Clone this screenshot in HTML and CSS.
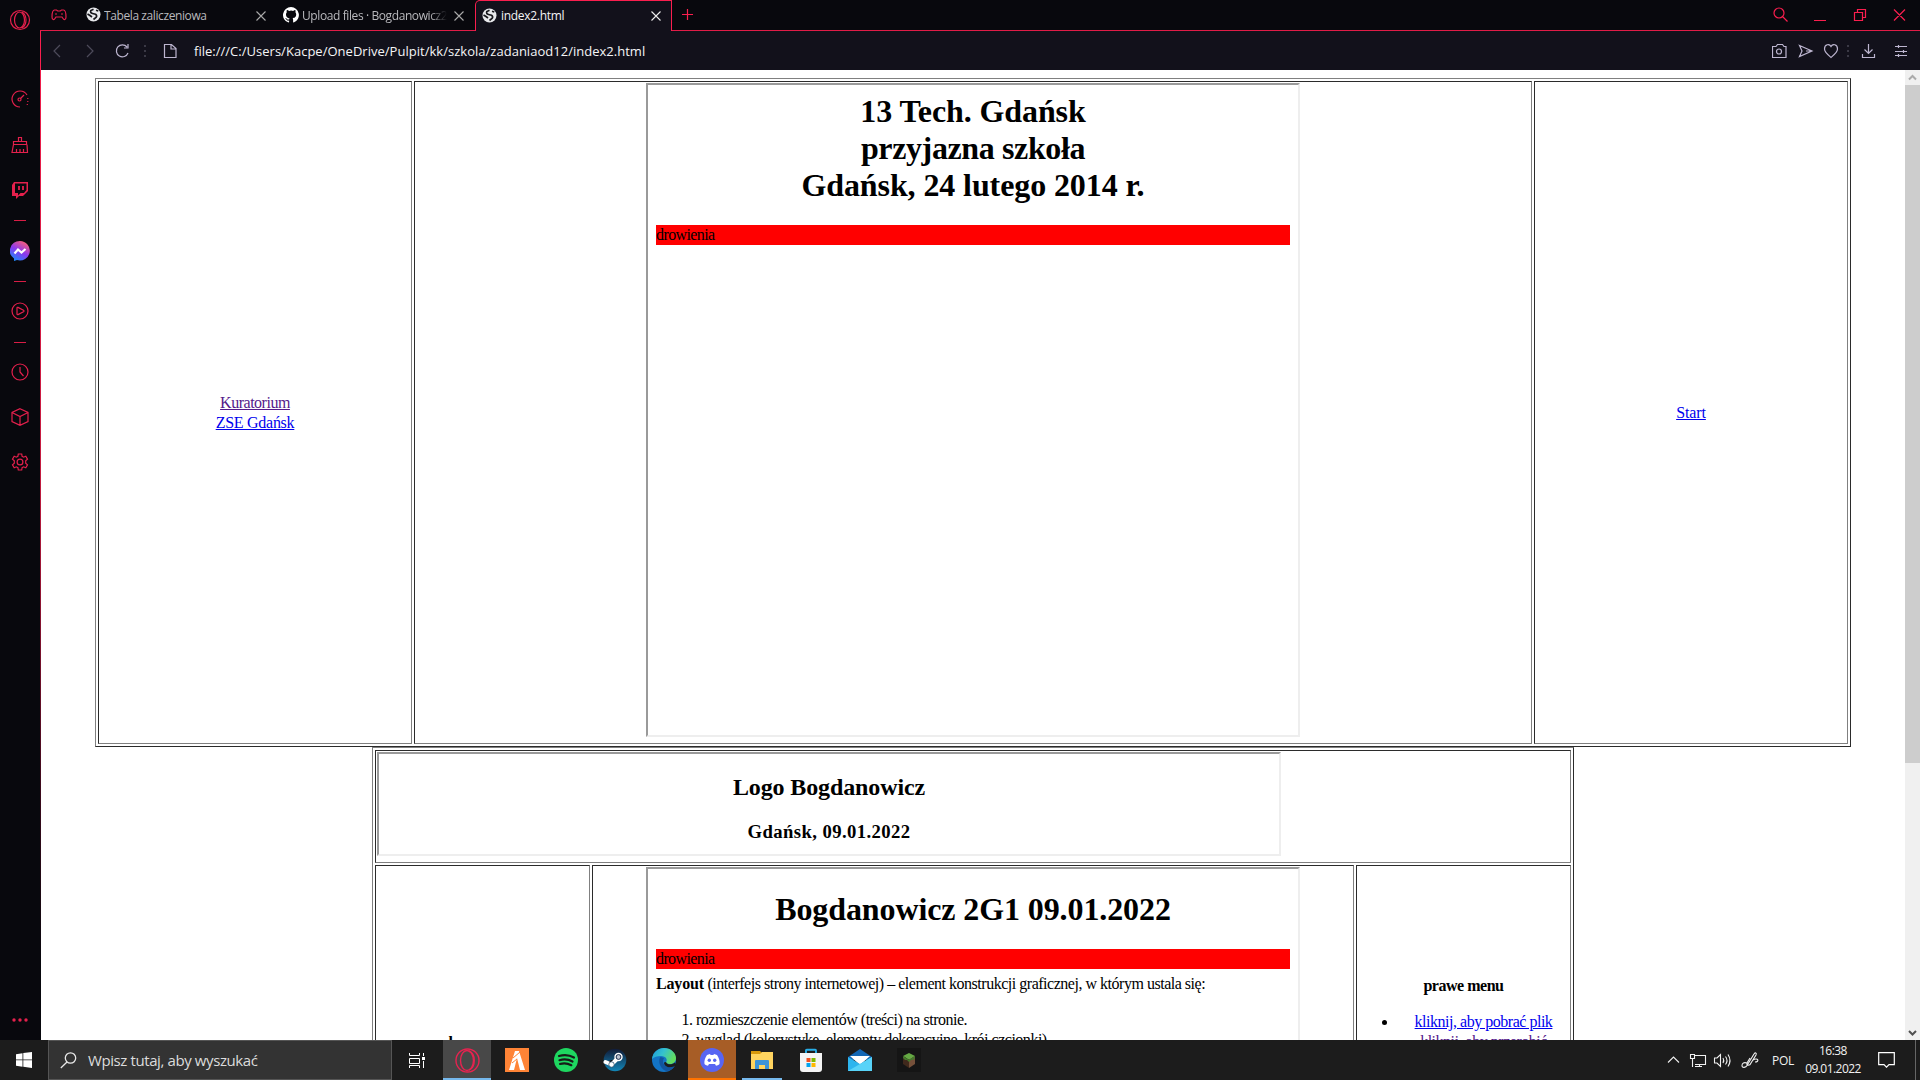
FILE: index.html
```html
<!DOCTYPE html>
<html lang="pl">
<head>
<meta charset="utf-8">
<title>index2.html</title>
<link rel="stylesheet" href="styles.css">
</head>
<body>
<div class="browser">
  <aside class="sidebar">
    <svg class="icon opera" width="22" height="22" viewBox="0 0 22 22"><circle cx="11" cy="11" r="9.5"/><ellipse cx="10.5" cy="11" rx="5" ry="8"/><path d="M13 3c3 2 4 5 4 8s-1 6-4 8"/></svg>
    <svg class="icon speed" width="18" height="18" viewBox="0 0 18 18"><path d="M9 17A8 8 0 1 1 16 5M16.800 8v1M16.800 11v1M16.300 14v1"/><circle cx="8.500" cy="9.500" r="1.500"/><path d="M9.500 8.500L13 5"/></svg>
    <svg class="icon broom" width="18" height="18" viewBox="0 0 18 18"><path d="M7.500 5V1.500h3V5M2.500 5.500h13v3h-13zM2.500 8.500L1 16.500h15.500l-.5-8M5.500 16.500V13M9 16.500V13M12.500 16.500V13"/></svg>
    <svg class="icon twitch" width="18" height="18" viewBox="0 0 18 18"><path class="solid" d="M3 1L1 4v11h4v3l3-3h4l5-5V1zm1 1.500h11.500V9L13 12H9.500L7 14.500V12H4z"/><path class="thick" d="M8 5v4M12 5v4"/></svg>
    <i class="dash dash1"></i>
    <svg class="messenger" width="20" height="20" viewBox="0 0 20 20"><defs><linearGradient id="ms" x1=".2" y1="1" x2=".75" y2="0"><stop offset="0" stop-color="#1590ff"/><stop offset=".5" stop-color="#8a38ee"/><stop offset="1" stop-color="#ff6074"/></linearGradient></defs><path fill="url(#ms)" d="M10 0a10 9.700 0 1 1-3 19l-3 1v-2.500A10 9.700 0 0 1 10 0z"/><path fill="none" stroke="#fff" stroke-width="2.200" d="M4.500 12.500L8 8.500l3.500 3L15.500 8"/></svg>
    <i class="dash dash2"></i>
    <svg class="icon play" width="18" height="18" viewBox="0 0 18 18"><circle cx="9" cy="9" r="8"/><path d="M6 6q0-1 1-.6l5.500 2.800q1 .8 0 1.500L7 12.600q-1 .3-1-.6z"/></svg>
    <i class="dash dash3"></i>
    <svg class="icon clock" width="18" height="18" viewBox="0 0 18 18"><circle cx="9" cy="9" r="8"/><path d="M9 4v5l3.500 4"/></svg>
    <svg class="icon cube" width="18" height="18" viewBox="0 0 18 18"><path d="M9 .7l8 3.800v9L9 17.300l-8-3.800v-9zM1 4.500l8 4 8-4M9 8.500v8.800"/></svg>
    <svg class="icon gear" width="18" height="18" viewBox="0 0 18 18"><circle cx="9" cy="9" r="2.900"/><path d="M7.300 1h3.400l.4 2.300 1.500.9 2.200-.9 1.700 2.900-1.800 1.500v2.600l1.800 1.500-1.700 2.900-2.200-.9-1.500.9-.4 2.300H7.300l-.4-2.300-1.500-.9-2.200.9-1.700-2.900 1.800-1.500V7.700L1.500 6.200l1.700-2.900 2.200.9 1.500-.9z"/></svg>
    <span class="spacer"></span>
    <svg class="dots" width="16" height="4" viewBox="0 0 16 4"><circle cx="2" cy="2" r="1.700"/><circle cx="8" cy="2" r="1.700"/><circle cx="14" cy="2" r="1.700"/></svg>
  </aside>
  <main class="main">
    <header class="tabs">
      <svg class="icon pad" width="16" height="12" viewBox="0 0 16 12"><path d="M3.500 1h2l1.200 1h2.600l1.200-1h2C14.500 1 15 4 15 8c0 3-2 3.300-3 1.500L11 8H5L4 9.500C3 11.300 1 11 1 8c0-4 .5-7 2.500-7zM4 5h2M10 5h2"/></svg>
      <div class="tab tab-a"><svg width="15" height="15" viewBox="0 0 15 15"><use href="#globe"/></svg><span class="label t1">Tabela zaliczeniowa</span><svg class="x" width="10" height="10" viewBox="0 0 10 10"><path d="M.5.5l9 9M9.500.5l-9 9"/></svg></div>
      <div class="tab tab-b"><svg width="16" height="16" viewBox="0 0 16 16"><path fill="#fff" d="M8 0a8 8 0 0 0-2.500 15.600c.4 0 .6-.2.600-.5v-1.500c-2.200.5-2.700-1-2.700-1-.4-.9-.9-1.200-.9-1.200-.7-.5.1-.5.100-.5.8.1 1.200.8 1.200.8.7 1.300 1.900.9 2.300.7.100-.5.300-.9.500-1.100-1.800-.2-3.600-.9-3.600-4 0-.9.3-1.600.8-2.100-.1-.2-.4-1 .1-2.100 0 0 .7-.2 2.200.8a7.500 7.500 0 0 1 4 0c1.500-1 2.200-.8 2.200-.8.4 1.100.2 1.900.1 2.100.5.600.8 1.300.8 2.100 0 3.100-1.900 3.700-3.600 3.900.3.300.5.800.5 1.500v2.300c0 .3.200.6.600.5A8 8 0 0 0 8 0z"/></svg><span class="label t2">Upload files · Bogdanowicz2</span><svg class="x" width="10" height="10" viewBox="0 0 10 10"><path d="M.5.5l9 9M9.500.5l-9 9"/></svg></div>
      <div class="tab active"><svg width="15" height="15" viewBox="0 0 15 15"><g id="globe"><circle cx="7.500" cy="7.500" r="7" fill="#e8e9ec"/><path d="M7.500 2.200L4.800 3.600q-.8 2.400 1.700 2.900l3 .8q2 1.500.5 3.200l-2.500 2M1.500 7l2.500 1.500 2 1.500M10 3.300l2.300.7" fill="none" stroke="#17171c" stroke-width="1.700"/></g></svg><span class="label t3">index2.html</span><svg class="x" width="10" height="10" viewBox="0 0 10 10"><path d="M.5.5l9 9M9.500.5l-9 9"/></svg></div>
      <svg class="icon plus" width="11" height="11" viewBox="0 0 11 11"><path d="M5.500 0v11M0 5.500h11"/></svg>
      <span class="spacer"></span>
      <svg class="icon win" width="134" height="15" viewBox="0 0 134 15"><circle cx="6" cy="6" r="5"/><path d="M9.500 9.500l5 5M41 13.500h12M81.500 5.500h8v8h-8zM84.500 5.500v-3h8v8h-3M121 2.500l11 11M132 2.500l-11 11"/></svg>
    </header>
    <div class="toolbar">
      <svg class="nav" width="128" height="16" viewBox="0 0 128 16"><g class="dim"><path d="M7 2L1 8l6 6M34 2l6 6-6 6"/></g><path d="M74 4a6 6 0 1 0 1 6M75 1v4h-4"/><path class="sep" d="M92 2v2M92 7v2M92 12v2"/><path d="M111.500 1.500h7l4.500 4v9h-11.500zM118 2v4h5"/></svg>
      <span class="url">file:///C:/Users/Kacpe/OneDrive/Pulpit/kk/szkola/zadaniaod12/index2.html</span>
      <span class="spacer"></span>
      <svg class="nav" width="136" height="16" viewBox="0 0 136 16"><path d="M.5 3.500h3.500l1.500-2h5l1.500 2h2v11H.5zM27.500 2.500L40 8l-12.500 5.500L30 8zM34 8h5"/><circle cx="7" cy="8.500" r="2.500"/><path d="M59 14.500C55 11 52.500 9 52.500 6c0-5 5-5.500 6.500-2.500C60.500.5 65.500 1 65.500 6c0 3-2.500 5-6.500 8.500z"/><path class="sep" d="M76 2v2M76 7v2M76 12v2"/><path d="M96.500 1v9M92.500 6.500l4 4 4-4M90.500 11v3.500h12V11M123 3.500h12M123 8.500h12M123 12.500h12M126.500 2v3M131.500 7v3M126.500 11v3"/></svg>
    </div>
    <div class="view">
      <div class="page">
        <table class="layout wide">
          <colgroup><col class="side"><col><col class="side"></colgroup>
          <tr class="top-row">
            <td><a class="visited" href="#">Kuratorium</a><br><a class="zse" href="#">ZSE Gdańsk</a></td>
            <td class="frame-cell"><div class="frame square"><h1 class="flush"><span class="name">13 Tech. Gdańsk</span><br><span class="motto">przyjazna szkoła</span><br><span class="date">Gdańsk, 24 lutego 2014 r.</span></h1><div class="red">drowienia</div></div></td>
            <td><a class="home" href="#">Start</a></td>
          </tr>
        </table>
        <table class="layout narrow">
          <colgroup><col class="side"><col><col class="side"></colgroup>
          <tr class="logo-row"><td colspan="3" class="frame-cell"><div class="frame banner"><h2>Logo Bogdanowicz</h2><h3>Gdańsk, 09.01.2022</h3></div></td></tr>
          <tr class="body-row">
            <td class="menu lewe"><b>lewe menu</b></td>
            <td class="frame-cell"><div class="frame square"><h1>Bogdanowicz 2G1 09.01.2022</h1><div class="red">drowienia</div>
              <p class="intro"><b>Layout</b> (interfejs strony internetowej) – element konstrukcji graficznej, w którym ustala się:</p>
              <ol><li>rozmieszczenie elementów (treści) na stronie.</li><li>wygląd (kolorystykę, elementy dekoracyjne, krój czcionki).</li></ol></div></td>
            <td class="menu prawe"><b>prawe menu</b><ul><li><a href="#">kliknij, aby pobrać plik</a></li><li><a class="visited" href="#">kliknij, aby przerobić</a></li></ul></td>
          </tr>
        </table>
      </div>
      <div class="scroll">
        <svg width="15" height="15" viewBox="0 0 15 15"><path d="M4 9.500L7.500 6 11 9.500" stroke="#aaa"/></svg>
        <div class="thumb"></div>
        <span class="spacer"></span>
        <svg width="15" height="15" viewBox="0 0 15 15"><path d="M4 6l3.500 3.500L11 6" stroke="#505050"/></svg>
      </div>
    </div>
  </main>
</div>
<footer class="taskbar">
  <div class="start"><svg width="16" height="16" viewBox="0 0 16 16"><path fill="#fff" d="M0 2.200L6.500 1.200v6.300H0zM7.300 1.100L16 0v7.500H7.300zM0 8.300h6.500v6.500L0 13.800zM7.300 8.300H16V16l-8.700-1.200z"/></svg></div>
  <div class="search"><svg width="17" height="17" viewBox="0 0 17 17"><circle cx="10.500" cy="6" r="5.200"/><path d="M7 10L.8 16"/></svg><span>Wpisz tutaj, aby wyszukać</span></div>
  <div class="app view-btn"><svg width="18" height="16" viewBox="0 0 18 16"><path fill="none" stroke="#fff" d="M1.500 1v2.500h10V1M1.500 6.500h10v5h-10zM1.500 16v-2.500h10V16M15.500 1v3M15.500 9v7"/><path fill="#fff" d="M14 5h3v3h-3z"/></svg></div>
  <div class="app on"><svg width="25" height="25" viewBox="0 0 25 25" fill="none" stroke="#e62350" stroke-width="1.400"><circle cx="12.500" cy="12.500" r="11.500"/><ellipse cx="12" cy="12.500" rx="6.500" ry="10"/><path d="M14 3c7 3 7 16 0 19"/></svg></div>
  <div class="app"><svg width="24" height="24" viewBox="0 0 24 24"><path fill="#ff8436" d="M0 0h24v24H0z"/><path fill="#fff" d="M10 3h4l6 19h-5L12 10 9 22H4z"/><path stroke="#ff8436" d="M8 10l7-6M7 15l5-4"/></svg></div>
  <div class="app"><svg width="24" height="24" viewBox="0 0 24 24"><circle cx="12" cy="12" r="12" fill="#1ed760"/><path fill="none" stroke="#171c18" stroke-linecap="round" stroke-width="2.200" d="M5 8q8-2.500 15 1.500M5.500 12.200q7-2 13 1.300M6 16q6-1.700 11.300 1.200"/></svg></div>
  <div class="app"><svg width="24" height="24" viewBox="0 0 24 24"><defs><linearGradient id="st" x2="0" y2="1"><stop stop-color="#111a36"/><stop offset="1" stop-color="#1387b8"/></linearGradient></defs><circle cx="12" cy="12" r="11.300" fill="url(#st)"/><path stroke="#fff" stroke-width="4" stroke-linecap="round" d="M2.500 14l6 2.500 6-6"/><circle cx="15.500" cy="9" r="4.200" fill="#fff"/><circle cx="15.500" cy="9" r="2.400" fill="#bcc4d2" stroke="#15284a"/><circle cx="8.500" cy="16.500" r="2.700" fill="#fff" stroke="#18405f" stroke-width=".7"/></svg></div>
  <div class="app"><svg width="24" height="24" viewBox="0 0 24 24"><defs><linearGradient id="ed" x2="1" y2=".4"><stop stop-color="#1999da"/><stop offset=".5" stop-color="#35c1cf"/><stop offset="1" stop-color="#62dc60"/></linearGradient></defs><circle cx="12" cy="12" r="12" fill="#1374c5"/><path fill="url(#ed)" d="M0 11C1 4 6 0 12 0c7 0 12 5 12 10 0 4-3 6-6 6-3 0-4-1-4-2 2-2 0-6-5-6-4 0-7 1-9 3z"/><path fill="#12549e" d="M8.500 9C6 12 7 20 14 23c4 0 7-2 9-5-5 3-11 1-12-4 0-2 .5-3 1-4z"/><path fill="#1c1c1c" d="M14 14c1 3 6 3 9 .5l1 2.500-2 1.500c-5 2-10 0-10-4z"/></svg></div>
  <div class="app alert"><svg width="24" height="24" viewBox="0 0 24 24"><circle cx="12" cy="12" r="12" fill="#5865f2"/><path fill="#fff" d="M7 7l3-1 .6 1h2.800l.6-1 3 1c2 3 3 6 2.500 9-1 1-2.500 1.500-3.500 1.700l-1-1.700H9l-1 1.700C7 17.500 5.500 17 4.500 16 4 13 5 10 7 7z"/><circle cx="9.300" cy="12.300" r="1.700" fill="#5865f2"/><circle cx="14.700" cy="12.300" r="1.700" fill="#5865f2"/></svg></div>
  <div class="app open"><svg width="22" height="20" viewBox="0 0 22 20"><path fill="#d8990c" d="M0 1h9l2 2v3H0z"/><path fill="#ffd45f" d="M0 4h9l2-2h11v17H0z"/><path fill="#3c94d8" d="M4 19v-8q0-1 1-1h12q1 0 1 1v8h-4v-4H8v4z"/></svg></div>
  <div class="app"><svg width="24" height="24" viewBox="0 0 24 24"><path d="M7 6V2.500q0-.7.700-.7h8.600q.7 0 .7.700V6" fill="none" stroke="#28aee8" stroke-width="1.900"/><path fill="#f4f4f4" d="M1 5h22v16q0 3-3 3H4q-3 0-3-3z"/><path fill="#f25022" d="M7.500 10h4v4h-4z"/><path fill="#7fba00" d="M12.500 10h4v4h-4z"/><path fill="#00a4ef" d="M7.500 15h4v4h-4z"/><path fill="#ffb900" d="M12.500 15h4v4h-4z"/></svg></div>
  <div class="app"><svg width="24" height="22" viewBox="0 0 24 22"><path fill="#1266b4" d="M0 8l12-8 12 8v3H0z"/><path fill="#fff" d="M2 7h20L12 16z"/><path fill="#2db5ee" d="M0 8l12 7 12-7v14H0z"/><path fill="#58d3f8" d="M0 22L24 8v14z"/></svg></div>
  <div class="app"><svg width="24" height="24" viewBox="0 0 24 24"><path fill="#151515" d="M0 0h24v24H0z"/><path fill="#65a944" d="M6 8l6-3 6 3-6 4z"/><path fill="#40291c" d="M6 8l6 4v8l-6-4z"/><path fill="#75503a" d="M12 12l6-4v8l-6 4z"/><path fill="#447a2d" d="M6 8l6 4 6-4v2l-2 2-2 0-2 2-2-2-2 0-2-2z"/></svg></div>
  <span class="spacer"></span>
  <svg class="tray" width="94" height="18" viewBox="0 0 94 18"><path d="M1 11.500L6.500 6l5.500 5.500M27.500 4.500H38.500v9H28M25.500 9v7M28 15.500h7M32.500 13.500v2M23.500 3.500h4v4h-4zM25.500 7v2M47.500 7v5h2.500l3.500 3.500v-12L50 7zM56 7q1.500 2.500 0 5M58.500 5.500q3 4 0 8M61 3.500q4 6 0 12"/><path d="M80 12c-3-1-5 0-5 2.500 0 3 4 2 5 0L87 3c1-2 3-1 2 1l-5 8c-1 3-5 3-4 0l3-5M86 9c5-3 7 2 2 2"/></svg>
  <span class="lang">POL</span>
  <div class="time"><span>16:38</span><span>09.01.2022</span></div>
  <svg class="note" width="17" height="16" viewBox="0 0 17 16"><path d="M.7.7h15.600v12H11l-2.500 2.500L6 12.700H.7z"/></svg>
  <i class="peek"></i>
</footer>
</body>
</html>
```
FILE: styles.css
```css
* { box-sizing: border-box; }
body { margin: 0; width: 1920px; height: 1080px; overflow: hidden; display: flex; flex-direction: column; background: #fff; font-family: "Open Sans", "Noto Sans", sans-serif; }
svg { display: block; flex: none; }
.spacer { flex: 1; }
.browser { display: flex; height: 1040px; background: #08080d; }

/* sidebar */
.sidebar { width: 40px; display: flex; flex-direction: column; align-items: center; padding: 9px 0 18px; }
.icon { fill: none; stroke: #e4204c; stroke-width: 1.2; }
.sidebar .icon { margin-right: 1px; }
.sidebar .opera { margin-right: 0; }
.sidebar .solid { fill: #e4204c; fill-rule: evenodd; stroke: none; }
.thick { stroke-width: 1.8; }
.speed { margin-top: 59px; }
.broom { margin-top: 28px; }
.twitch, .cube, .gear { margin-top: 27px; }
.dash { width: 12px; height: 1px; background: #d81d45; }
.dash1 { margin-top: 21px; }
.messenger { margin-top: 20px; }
.dash2 { margin-top: 20px; }
.play { margin-top: 20px; }
.dash3 { margin-top: 22px; }
.clock { margin-top: 20px; }
.dots { fill: #e4204c; }

/* tabs */
.main { width: 1880px; display: flex; flex-direction: column; }
.tabs { height: 31px; display: flex; align-items: flex-start; border-bottom: 1px solid #e01c47; }
.pad { margin: 9px 0 0 11px; }
.tab { height: 30px; display: flex; align-items: center; padding-bottom: 1px; color: #b9b9bd; font-size: 12px; letter-spacing: -.4px; white-space: nowrap; }
.label { flex: 1; overflow: hidden; line-height: 20px; margin-top: 2px; }
.x { fill: none; stroke: #aaa; stroke-width: 1.1; margin-top: 2px; }
.tab-a { width: 180px; margin-left: 19px; gap: 3px; }
.tab-b { width: 181px; margin-left: 17px; gap: 3px; }
.tab-b .label { -webkit-mask-image: linear-gradient(90deg, #000 128px, transparent 145px); margin-right: 3px; }
.active { width: 197px; height: 31px; margin-left: 11px; padding: 0 10px 2px 6px; gap: 4px; background: #12111b; border: 1px solid #fa1e4e; border-bottom: 0; border-radius: 5px 0 0 0; color: #f4f4f6; letter-spacing: -.3px; }
.active .x { stroke: #eee; }
.plus { margin: 9px 0 0 10px; stroke: #fa1e4e; }
.win { margin: 7px 13px 0 0; stroke: #fa1e4e; }

/* address bar */
.toolbar { height: 39px; display: flex; align-items: center; background: #12111b; border-left: 1px solid #fa1e4e; padding: 0 12px 0 12px; }
.nav { fill: none; stroke: #bdb6d0; stroke-width: 1.2; }
.dim { opacity: .35; }
.sep { stroke: #3a3945; stroke-width: 2; }
.url { margin-left: 13px; font-size: 13px; line-height: 20px; letter-spacing: .02px; color: #f5f5f7; white-space: nowrap; }

/* document */
.view { height: 970px; display: flex; background: #fff; border: 0 solid; border-left-width: 1px; border-image: linear-gradient(#f01d4b, #c31b40 42%, #3a0a1c 75%, #08080d 92%) 1; overflow: hidden; }
.page { width: 1864px; padding: 8px; font: 16px/20px "Liberation Serif", serif; letter-spacing: -.48px; color: #000; }
.layout { margin: 0 auto; table-layout: fixed; border-collapse: separate; border-spacing: 2px; border: 1px solid; border-color: #808080 #2b2b2b #2b2b2b #808080; }
.wide { width: 1756px; }
.narrow { width: 1202px; }
.wide .side { width: 314px; }
.narrow .side { width: 215px; }
.layout td { border: 1px solid; border-color: #2b2b2b #808080 #808080 #2b2b2b; padding: 1px; text-align: center; vertical-align: middle; }
.layout .frame-cell, .layout .menu { vertical-align: top; }
.top-row { height: 663px; }
.logo-row { height: 113px; }
.body-row { height: 663px; }
.frame { border: 2px solid; border-color: #9a9a9a #eee #eee #9a9a9a; padding: 8px; margin: 0 auto; }
.square { width: 654px; height: 654px; }
.banner { width: 904px; height: 104px; margin: 0; }
.frame h1 { font-size: 32px; line-height: 37px; letter-spacing: -.1px; margin: 14px 0 21px; }
.frame h1.flush { margin-top: 0; }
.motto { letter-spacing: -.38px; }
.banner h2 { font-size: 24px; line-height: 28px; letter-spacing: -.12px; margin: 11px 0 0; }
.banner h3 { font-size: 18.7px; line-height: 22px; letter-spacing: .4px; margin: 20px 0 0; }
.red { background: #f00; height: 20px; text-align: left; letter-spacing: -.6px; }
.intro { margin: 5px 0 16px; text-align: left; white-space: nowrap; }
.intro b { letter-spacing: -.15px; }
.frame ol { margin: 0; padding-left: 40px; text-align: left; }
a { color: #00e; }
a.visited { color: #551a8b; }
.zse { letter-spacing: -.27px; }
.home { letter-spacing: -.1px; }
.menu ul { margin: 16px 0 0; padding-left: 40px; }
.layout .prawe { padding-top: 110px; }
.layout .lewe { padding-top: 167px; }

.scroll { width: 15px; background: #f0f0f0; display: flex; flex-direction: column; fill: none; stroke-width: 2; }
.thumb { height: 678px; background: #cdcdcd; }

/* taskbar */
.taskbar { height: 40px; display: flex; background: #1c1c1c; color: #f2f2f2; align-items: center; }
.start { width: 48px; display: flex; justify-content: center; }
.search { width: 344px; height: 40px; display: flex; align-items: center; gap: 11px; padding-left: 11px; background: #333; border: 1px solid #555; fill: none; stroke: #e8e8e8; stroke-width: 1.3; font-size: 15px; letter-spacing: -.4px; color: #dcdcdc; }
.app { width: 49px; height: 40px; display: flex; align-items: center; justify-content: center; }
.view-btn { width: 51px; padding-right: 2px; }
.on { width: 48px; margin-right: 1px; background: #484848; box-shadow: inset 0 -2px #76b9ed; }
.alert { width: 48px; margin-right: 1px; background: #a75d26; box-shadow: inset 0 -2px #ff7300; }
.open { background: linear-gradient(#76b9ed, #76b9ed) center bottom / 40px 2px no-repeat; }
.tray { fill: none; stroke: #f0f0f0; stroke-width: 1.1; }
.lang { margin-left: 11px; font-size: 12px; width: 32px; letter-spacing: -.3px; }
.time { width: 58px; display: flex; flex-direction: column; align-items: center; font-size: 12px; line-height: 18px; letter-spacing: -.55px; white-space: nowrap; }
.note { margin: 0 20px 0 16px; fill: none; stroke: #fff; stroke-width: 1.2; }
.peek { width: 5px; height: 40px; border-left: 1px solid #666; }
```
